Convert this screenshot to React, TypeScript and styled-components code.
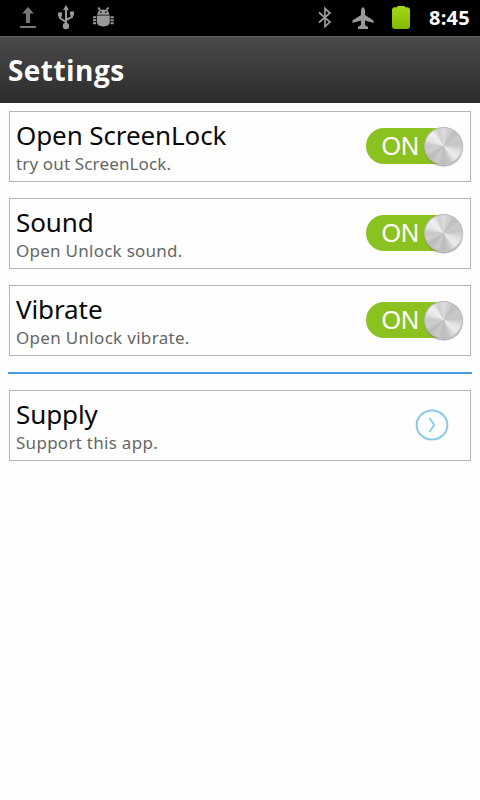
import React from "react";
import styled, { createGlobalStyle } from "styled-components";

const GlobalStyle = createGlobalStyle`
  * { box-sizing: border-box; }
  body { margin: 0; background: #fff; }
`;

const Screen = styled.div`
  width: 480px;
  height: 800px;
  overflow: hidden;
  background: #fefefe;
  font-family: "Noto Sans", "Open Sans", sans-serif;
`;

const StatusBar = styled.div`
  display: flex;
  justify-content: space-between;
  height: 36px;
  padding: 0 10px 0 18px;
  background: #000;
`;

const IconGroup = styled.div`
  display: flex;
  align-items: center;
  gap: 14px;
`;

const StatusIcon = styled.svg`
  display: block;
  width: 24px;
  height: 36px;
  overflow: visible;
`;

const Clock = styled.time`
  width: 41px;
  margin-left: 2px;
  color: #fff;
  font: 700 20px/36px "Open Sans", "Noto Sans", sans-serif;
  letter-spacing: 0.2px;
  white-space: nowrap;
`;

const Header = styled.header`
  height: 67px;
  padding: 0 8px;
  border-top: 1px solid #626262;
  background: linear-gradient(#4a4a4a, #2c2c2c);
`;

const Heading = styled.h1`
  margin: 0;
  color: #fff;
  font: 700 28px/67px "Open Sans", "Noto Sans", sans-serif;
  letter-spacing: 0.45px;
`;

const List = styled.main`
  display: flex;
  flex-direction: column;
  gap: 16px;
  padding: 8px 8px 0;
`;

const Card = styled.section`
  display: flex;
  justify-content: space-between;
  height: 71px;
  margin: 0 1px;
  padding: 0 7px 0 6px;
  border: 1px solid #b4b4b4;
`;

const Labels = styled.div`
  padding-top: 6px;
`;

const Title = styled.div`
  color: #0a0a0a;
  font-size: 26px;
  line-height: 35px;
  letter-spacing: -0.1px;
  white-space: nowrap;
`;

const Summary = styled.div<{ $spacing: number }>`
  padding-top: 1px;
  color: #666;
  font-size: 17px;
  line-height: 20px;
  letter-spacing: ${(p) => p.$spacing}px;
  white-space: nowrap;
`;

const Toggle = styled.button`
  display: flex;
  align-items: flex-start;
  width: 97px;
  height: 40px;
  margin-top: 14px;
  padding: 0;
  border: 0;
  background: none;
`;

const Track = styled.span`
  flex: none;
  width: 88px;
  height: 36px;
  margin: 2px -30px 0 0;
  padding-left: 15.5px;
  border-radius: 18px;
  background: #8cc220;
  color: #fff;
  font: 25px/37px "Liberation Sans", sans-serif;
  text-align: left;
`;

const Knob = styled.span`
  flex: none;
  width: 39px;
  height: 38px;
  margin-top: 1px;
  border: 1px solid #b8b8b8;
  border-radius: 50%;
  background: conic-gradient(
    #dcdcdc 0deg, #cfcfcf 20deg, #bdbdbd 40deg, #cacaca 60deg, #c6c6c6 85deg,
    #e2e2e2 112deg, #ececec 135deg, #c6c6c6 160deg, #bcbcbc 180deg,
    #cbcbcb 205deg, #bababa 230deg, #cecece 250deg, #c8c8c8 270deg,
    #e4e4e4 292deg, #f0f0f0 318deg, #cdcdcd 342deg, #dcdcdc 360deg
  );
  box-shadow: 0 1.5px 1px #77777799;
`;

const Divider = styled.hr`
  width: 100%;
  height: 2px;
  margin: 0;
  border: 0;
  background: #4c9ce4;
`;

const Arrow = styled.svg`
  width: 34px;
  height: 34px;
  margin: 17px 14px 0 0;
  fill: none;
  stroke: #89cae3;
`;

const settings = [
  { title: "Open ScreenLock", summary: "try out ScreenLock.", spacing: 0.15 },
  { title: "Sound", summary: "Open Unlock sound.", spacing: 0.26 },
  { title: "Vibrate", summary: "Open Unlock vibrate.", spacing: 0.31 },
];

export default function App() {
  return (
    <Screen>
      <GlobalStyle />
      <StatusBar>
        <IconGroup>
          <StatusIcon viewBox="0 0 24 36" fill="#777">
            <path d="M10 7 16 13.5H12V23H8V13.5H4ZM2 26H18V28H2Z" />
          </StatusIcon>
          <StatusIcon viewBox="0 0 24 36" fill="#999">
            <path d="M10 5 13 10H7Z" />
            <circle cx="10" cy="26" r="3.2" />
            <rect x="2" y="12.5" width="4" height="4" />
            <rect x="14" y="11.5" width="4" height="4" />
            <path d="M10 9V26M4 15V18L10 22M16 13V17L10 20" fill="none" stroke="#999" strokeWidth="2" />
          </StatusIcon>
          <StatusIcon viewBox="0 0 24 36" fill="#999">
            <path d="M3.3 14.8Q3.6 9.4 9.3 9.4Q15 9.4 15.3 14.8ZM2.8 15.6H15.8V22Q15.8 26 9.3 26.5Q2.8 26 2.8 22Z" />
            <path d="M6 10 4.3 7.5M12.6 10 14.3 7.5M-1 17.2H2.1M-1 20.2H2.1M-1 23.2H2.1M16.5 17.2H19.7M16.5 20.2H19.7M16.5 23.2H19.7" stroke="#999" strokeWidth="2" />
            <path d="M6.2 11.5H7.7V13H6.2ZM11 11.5H12.5V13H11Z" fill="#111" />
          </StatusIcon>
        </IconGroup>
        <IconGroup>
          <StatusIcon viewBox="0 0 24 36" fill="none" stroke="#999" strokeWidth="1.7">
            <path d="M6 12.5 17 22 12 26.5V8.5L17 13 6 22.5" />
          </StatusIcon>
          <StatusIcon viewBox="0 0 24 36" fill="#999">
            <path d="M12 7Q14 8 14 11V15L22.5 20.5V23L14 20.5V25L17 27V29H7V27L10 25V20.5L1.5 23V20.5L10 15V11Q10 8 12 7Z" />
          </StatusIcon>
          <StatusIcon viewBox="0 0 24 36">
            <defs>
              <linearGradient id="battery" x2="0" y2="1">
                <stop stopColor="#a2d81c" />
                <stop offset="1" stopColor="#83bb00" />
              </linearGradient>
            </defs>
            <path d="M8 7.2Q8 6 9 6H15Q16 6 16 7.2H18Q21 7.5 21 10V26Q21 29 18 29H6Q3 29 3 26V10Q3 7.5 6 7.2Z" fill="url(#battery)" />
          </StatusIcon>
          <Clock>8:45</Clock>
        </IconGroup>
      </StatusBar>
      <Header>
        <Heading>Settings</Heading>
      </Header>
      <List>
        {settings.map((s) => (
          <Card key={s.title}>
            <Labels>
              <Title>{s.title}</Title>
              <Summary $spacing={s.spacing}>{s.summary}</Summary>
            </Labels>
            <Toggle role="switch" aria-checked="true" aria-label={s.title}>
              <Track>ON</Track>
              <Knob />
            </Toggle>
          </Card>
        ))}
        <Divider />
        <Card>
          <Labels>
            <Title>Supply</Title>
            <Summary $spacing={0.28}>Support this app.</Summary>
          </Labels>
          <Arrow viewBox="0 0 34 34">
            <ellipse cx="17" cy="17" rx="15.4" ry="14.6" strokeWidth="2" />
            <path d="M14.5 10 19.2 17 14.5 24" strokeWidth="1.8" />
          </Arrow>
        </Card>
      </List>
    </Screen>
  );
}
